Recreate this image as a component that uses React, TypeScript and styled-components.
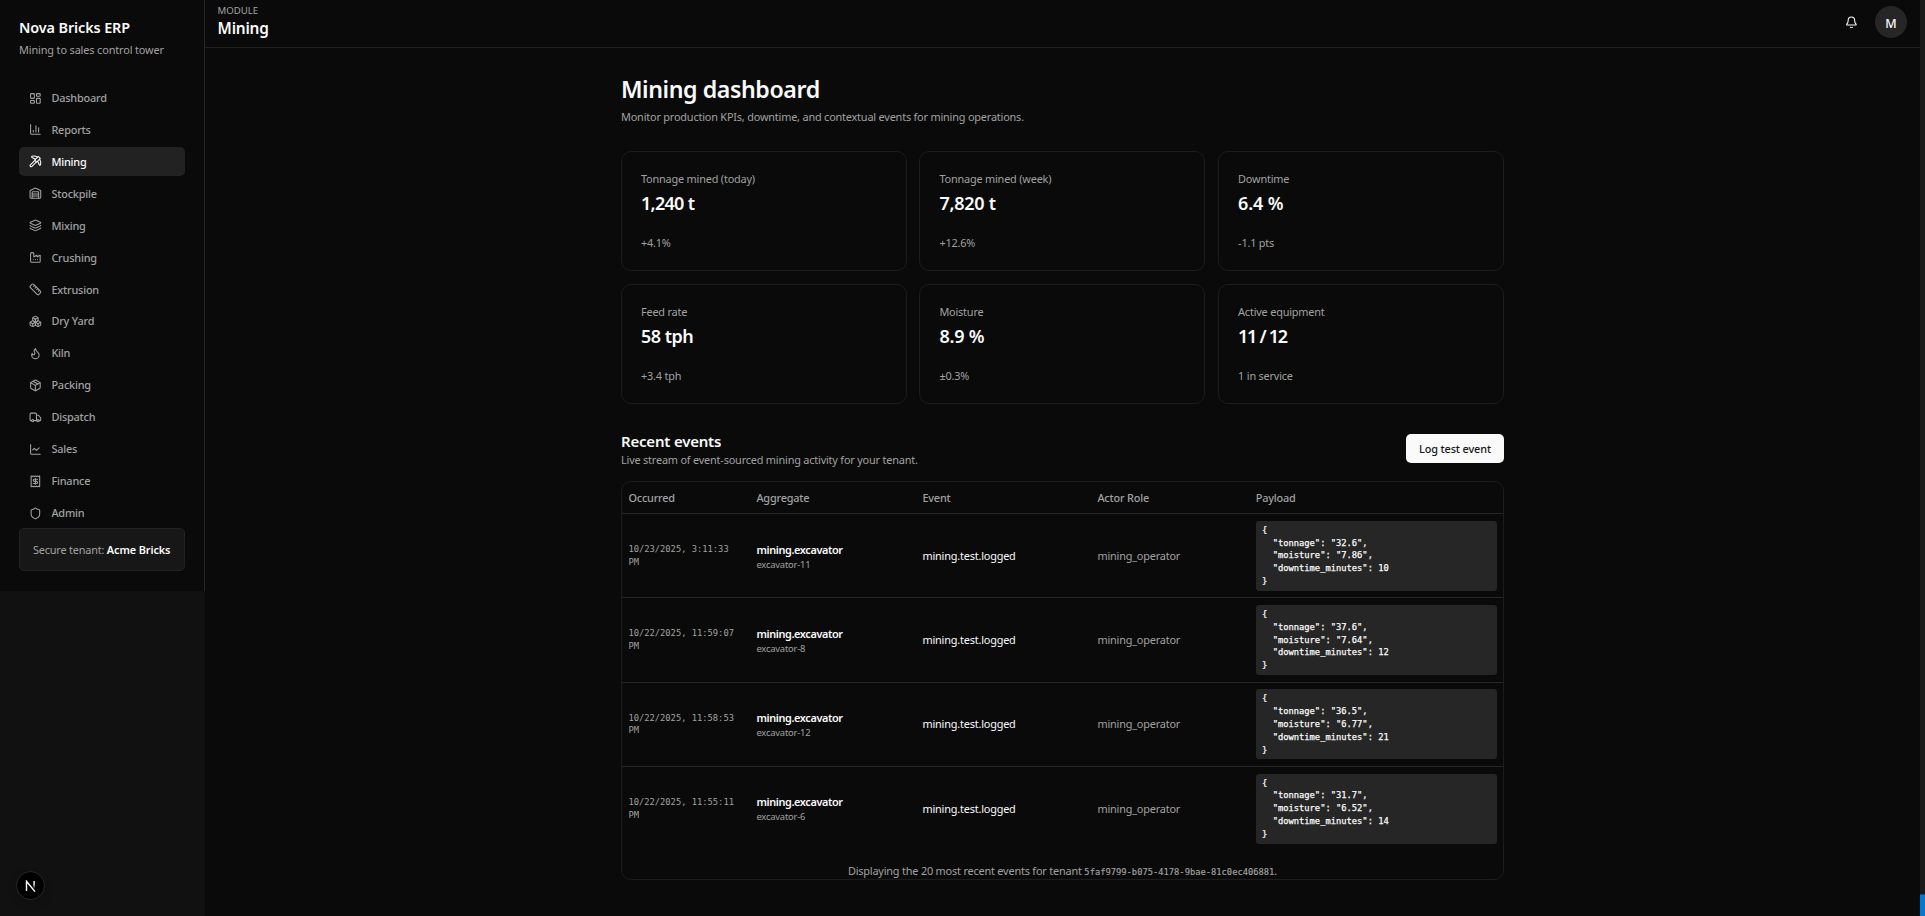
import React from 'react';
import styled, { createGlobalStyle, css } from 'styled-components';
import {
  Bell,
  Boxes,
  ChartColumn,
  ChartLine,
  Factory,
  Flame,
  Layers,
  LayoutDashboard,
  Package,
  Pickaxe,
  Receipt,
  Ruler,
  Shield,
  Truck,
  Warehouse,
  type LucideIcon,
} from 'lucide-react';

const c = {
  bg: '#0a0a0a',
  rail: '#111111',
  card: '#171717',
  active: '#222222',
  fill: '#262626',
  line: '#212121',
  edge: '#1c1c1c',
  text: '#fafafa',
  muted: '#a1a1a1',
};

const GlobalStyle = createGlobalStyle`
  *, *::before, *::after { box-sizing: border-box; }
  body {
    margin: 0;
    background: ${c.bg};
    color: ${c.text};
    font-family: "Noto Sans", "Open Sans", sans-serif;
    font-size: 10.9px;
    line-height: 16px;
    letter-spacing: -0.19px;
    overflow: hidden;
  }
  h1, h2, p, pre { margin: 0; }
`;

const mono = css`
  font-family: "DejaVu Sans Mono", monospace;
  font-size: 8.77px;
  line-height: 12.8px;
  letter-spacing: 0;
`;

const Shell = styled.div`
  display: flex;
  height: 916px;
`;

const Rail = styled.div`
  width: 205px;
  flex: none;
  background: ${c.rail};
`;

const Sidebar = styled.aside`
  height: 591px;
  padding: 18px 19px 0;
  background: ${c.bg};
  border-right: 1px solid #262626;
`;

const Brand = styled.div`
  font-size: 14.4px;
  font-weight: 600;
  line-height: 20px;
  letter-spacing: -0.1px;
`;

const Tagline = styled.p`
  margin-top: 4px;
  letter-spacing: -0.13px;
  color: ${c.muted};
`;

const Nav = styled.nav`
  display: flex;
  flex-direction: column;
  gap: 3.2px;
  margin-top: 25.55px;
`;

const NavItem = styled.a<{ $active?: boolean }>`
  display: flex;
  align-items: center;
  gap: 9.6px;
  height: 28.76px;
  padding: 0 10px;
  border-radius: 5px;
  font-weight: 500;
  color: ${(p) => (p.$active ? c.text : c.muted)};
  background: ${(p) => (p.$active ? c.active : 'transparent')};
`;

const Tenant = styled.div`
  margin-top: 0.3px;
  padding: 12.8px 13px;
  height: 43px;
  border: 1px solid #222222;
  border-radius: 5px;
  background: ${c.card};
  color: ${c.muted};
  letter-spacing: -0.19px;
  white-space: nowrap;

  strong {
    color: ${c.text};
    font-weight: 600;
    letter-spacing: -0.1px;
  }
`;

const Content = styled.div`
  flex: 1;
  min-width: 0;
`;

const TopBar = styled.header`
  display: flex;
  align-items: flex-start;
  justify-content: space-between;
  height: 48px;
  padding: 4px 13px 0 12.6px;
  border-bottom: 1px solid ${c.line};
`;

const ModuleLabel = styled.div`
  font-size: 9.6px;
  line-height: 13px;
  letter-spacing: 0;
  color: ${c.muted};
`;

const ModuleName = styled.div`
  font-size: 15.4px;
  font-weight: 600;
  line-height: 24px;
  letter-spacing: -0.2px;
`;

const Account = styled.div`
  display: flex;
  align-items: center;
  gap: 17px;
  padding-top: 2px;
`;

const Avatar = styled.div`
  display: grid;
  place-items: center;
  width: 32px;
  height: 32px;
  padding-top: 3px;
  border-radius: 50%;
  background: ${c.fill};
  font-size: 12.4px;
  font-weight: 500;
  letter-spacing: 0;
`;

const Main = styled.main`
  width: 883px;
  margin: 0 auto;
  padding-top: 27.4px;
`;

const Title = styled.h1`
  font-size: 23.2px;
  font-weight: 600;
  line-height: 28.8px;
  letter-spacing: -0.43px;
`;

const Subtitle = styled.p`
  color: ${c.muted};
`;

const PageHead = styled.div`
  display: flex;
  flex-direction: column;
  gap: 4.6px;
  height: 75.8px;
`;

const KpiGrid = styled.section`
  display: grid;
  grid-template-columns: 285.6px 285.9px 1fr;
  grid-auto-rows: 120px;
  gap: 13px 12.8px;
`;

const KpiCard = styled.article`
  padding: 19px;
  border: 1px solid ${c.edge};
  border-radius: 10px;
`;

const KpiLabel = styled.div`
  color: ${c.muted};
`;

const KpiValue = styled.div<{ $tracking: number }>`
  margin-top: 4px;
  font-size: 18px;
  font-weight: 600;
  line-height: 25.6px;
  letter-spacing: ${(p) => p.$tracking}px;
`;

const KpiDelta = styled.div`
  margin-top: 18px;
  color: ${c.muted};
`;

const EventsHead = styled.div`
  display: flex;
  align-items: flex-start;
  justify-content: space-between;
  height: 50px;
  margin-top: 27px;
`;

const SectionTitle = styled.h2`
  font-size: 15px;
  font-weight: 600;
  line-height: 21px;
  letter-spacing: -0.2px;
`;

const LogButton = styled.button`
  width: 98px;
  height: 29px;
  margin-top: 3px;
  padding: 0;
  border: 0;
  border-radius: 5px;
  background: ${c.text};
  color: #171717;
  font: inherit;
  font-weight: 500;
  letter-spacing: -0.14px;
`;

const TablePanel = styled.section`
  height: 399px;
  border: 1px solid ${c.edge};
  border-radius: 10px;
`;

const columns = css`
  display: grid;
  grid-template-columns: 128px 166px 175px 158.3px 1fr;
  align-items: center;
`;

const HeadRow = styled.div`
  ${columns}
  height: 32px;
  border-bottom: 1px solid #262626;
  font-weight: 500;
  color: ${c.muted};
`;

const Row = styled.div`
  ${columns}
  height: 84.25px;
  border-bottom: 1px solid #262626;

  &:last-of-type {
    border-bottom-color: transparent;
  }
`;

const Cell = styled.div<{ $muted?: boolean }>`
  padding: 0 6.4px;
  color: ${(p) => (p.$muted ? c.muted : c.text)};
`;

const Timestamp = styled.div`
  ${mono}
  color: ${c.muted};
`;

const AggregateName = styled.div`
  padding-top: 1.6px;
  font-weight: 600;
  letter-spacing: -0.38px;
`;

const AggregateId = styled.div`
  padding-top: 1px;
  font-size: 9.4px;
  line-height: 12.8px;
  color: ${c.muted};
`;

const Payload = styled.pre`
  ${mono}
  height: 70px;
  padding: 3px 6.4px;
  border-radius: 3px;
  background: ${c.fill};
  color: ${c.text};
  -webkit-text-stroke: 0.25px ${c.text};
`;

const Caption = styled.p`
  margin-top: 12.1px;
  text-align: center;
  color: ${c.muted};

  code {
    ${mono}
    -webkit-text-stroke: 0.15px ${c.muted};
  }
`;

const Scrollbar = styled.div`
  display: flex;
  flex-direction: column;
  justify-content: flex-end;
  width: 5px;
  flex: none;
  background: #1a1a1a;
`;

const ScrollMark = styled.div`
  height: 22px;
  border-top: 1px solid #3a3a3a;
  background: #0078d4;
`;

const DevBadge = styled.div`
  position: fixed;
  left: 16px;
  top: 871px;
  display: grid;
  place-items: center;
  width: 29px;
  height: 29px;
  border: 1px solid #292929;
  border-radius: 50%;
  background: #000;
  box-shadow: 0 3px 8px rgba(0, 0, 0, 0.2);
`;

const nav: [string, LucideIcon][] = [
  ['Dashboard', LayoutDashboard],
  ['Reports', ChartColumn],
  ['Mining', Pickaxe],
  ['Stockpile', Warehouse],
  ['Mixing', Layers],
  ['Crushing', Factory],
  ['Extrusion', Ruler],
  ['Dry Yard', Boxes],
  ['Kiln', Flame],
  ['Packing', Package],
  ['Dispatch', Truck],
  ['Sales', ChartLine],
  ['Finance', Receipt],
  ['Admin', Shield],
];

const kpis = [
  { label: 'Tonnage mined (today)', value: '1,240 t', delta: '+4.1%', tracking: -0.7 },
  { label: 'Tonnage mined (week)', value: '7,820 t', delta: '+12.6%', tracking: -0.25 },
  { label: 'Downtime', value: '6.4 %', delta: '-1.1 pts', tracking: -0.15 },
  { label: 'Feed rate', value: '58 tph', delta: '+3.4 tph', tracking: -0.5 },
  { label: 'Moisture', value: '8.9 %', delta: '±0.3%', tracking: -0.2 },
  { label: 'Active equipment', value: '11 / 12', delta: '1 in service', tracking: -1.3 },
];

const events = [
  { at: '10/23/2025, 3:11:33 PM', id: 'excavator-11', tonnage: '32.6', moisture: '7.86', downtime_minutes: 10 },
  { at: '10/22/2025, 11:59:07 PM', id: 'excavator-8', tonnage: '37.6', moisture: '7.64', downtime_minutes: 12 },
  { at: '10/22/2025, 11:58:53 PM', id: 'excavator-12', tonnage: '36.5', moisture: '6.77', downtime_minutes: 21 },
  { at: '10/22/2025, 11:55:11 PM', id: 'excavator-6', tonnage: '31.7', moisture: '6.52', downtime_minutes: 14 },
];

export default function App() {
  return (
    <>
      <GlobalStyle />
      <Shell>
        <Rail>
          <Sidebar>
            <Brand>Nova Bricks ERP</Brand>
            <Tagline>Mining to sales control tower</Tagline>
            <Nav>
              {nav.map(([label, Icon]) => (
                <NavItem key={label} $active={label === 'Mining'}>
                  <Icon size={12.8} strokeWidth={2} />
                  {label}
                </NavItem>
              ))}
            </Nav>
            <Tenant>
              Secure tenant: <strong>Acme Bricks</strong>
            </Tenant>
          </Sidebar>
        </Rail>
        <Content>
          <TopBar>
            <div>
              <ModuleLabel>MODULE</ModuleLabel>
              <ModuleName>Mining</ModuleName>
            </div>
            <Account>
              <Bell size={12.8} />
              <Avatar>M</Avatar>
            </Account>
          </TopBar>
          <Main>
            <PageHead>
              <Title>Mining dashboard</Title>
              <Subtitle>
                Monitor production KPIs, downtime, and contextual events for mining operations.
              </Subtitle>
            </PageHead>
            <KpiGrid>
              {kpis.map((k) => (
                <KpiCard key={k.label}>
                  <KpiLabel>{k.label}</KpiLabel>
                  <KpiValue $tracking={k.tracking}>{k.value}</KpiValue>
                  <KpiDelta>{k.delta}</KpiDelta>
                </KpiCard>
              ))}
            </KpiGrid>
            <EventsHead>
              <div>
                <SectionTitle>Recent events</SectionTitle>
                <Subtitle>Live stream of event-sourced mining activity for your tenant.</Subtitle>
              </div>
              <LogButton>Log test event</LogButton>
            </EventsHead>
            <TablePanel>
              <HeadRow>
                <Cell $muted>Occurred</Cell>
                <Cell $muted>Aggregate</Cell>
                <Cell $muted>Event</Cell>
                <Cell $muted>Actor Role</Cell>
                <Cell $muted>Payload</Cell>
              </HeadRow>
              {events.map(({ at, id, ...payload }) => (
                <Row key={at}>
                  <Cell>
                    <Timestamp>{at}</Timestamp>
                  </Cell>
                  <Cell>
                    <AggregateName>mining.excavator</AggregateName>
                    <AggregateId>{id}</AggregateId>
                  </Cell>
                  <Cell>mining.test.logged</Cell>
                  <Cell $muted>mining_operator</Cell>
                  <Cell>
                    <Payload>{JSON.stringify(payload, null, 2)}</Payload>
                  </Cell>
                </Row>
              ))}
              <Caption>
                Displaying the 20 most recent events for tenant{' '}
                <code>5faf9799-b075-4178-9bae-81c0ec406881</code>.
              </Caption>
            </TablePanel>
          </Main>
        </Content>
        <Scrollbar>
          <ScrollMark />
        </Scrollbar>
      </Shell>
      <DevBadge>
        <svg width="11" height="12" viewBox="0 0 11 12" fill="none" strokeWidth="1.4">
          <defs>
            <linearGradient id="stem" x1="0" y1="0" x2="0" y2="1">
              <stop offset="0.4" stopColor="#fff" />
              <stop offset="1" stopColor="#fff" stopOpacity="0" />
            </linearGradient>
          </defs>
          <path d="M1.5 11V1.2L10 11.6" stroke="#fff" />
          <rect x="8.4" y="1" width="1.4" height="8" fill="url(#stem)" />
        </svg>
      </DevBadge>
    </>
  );
}
